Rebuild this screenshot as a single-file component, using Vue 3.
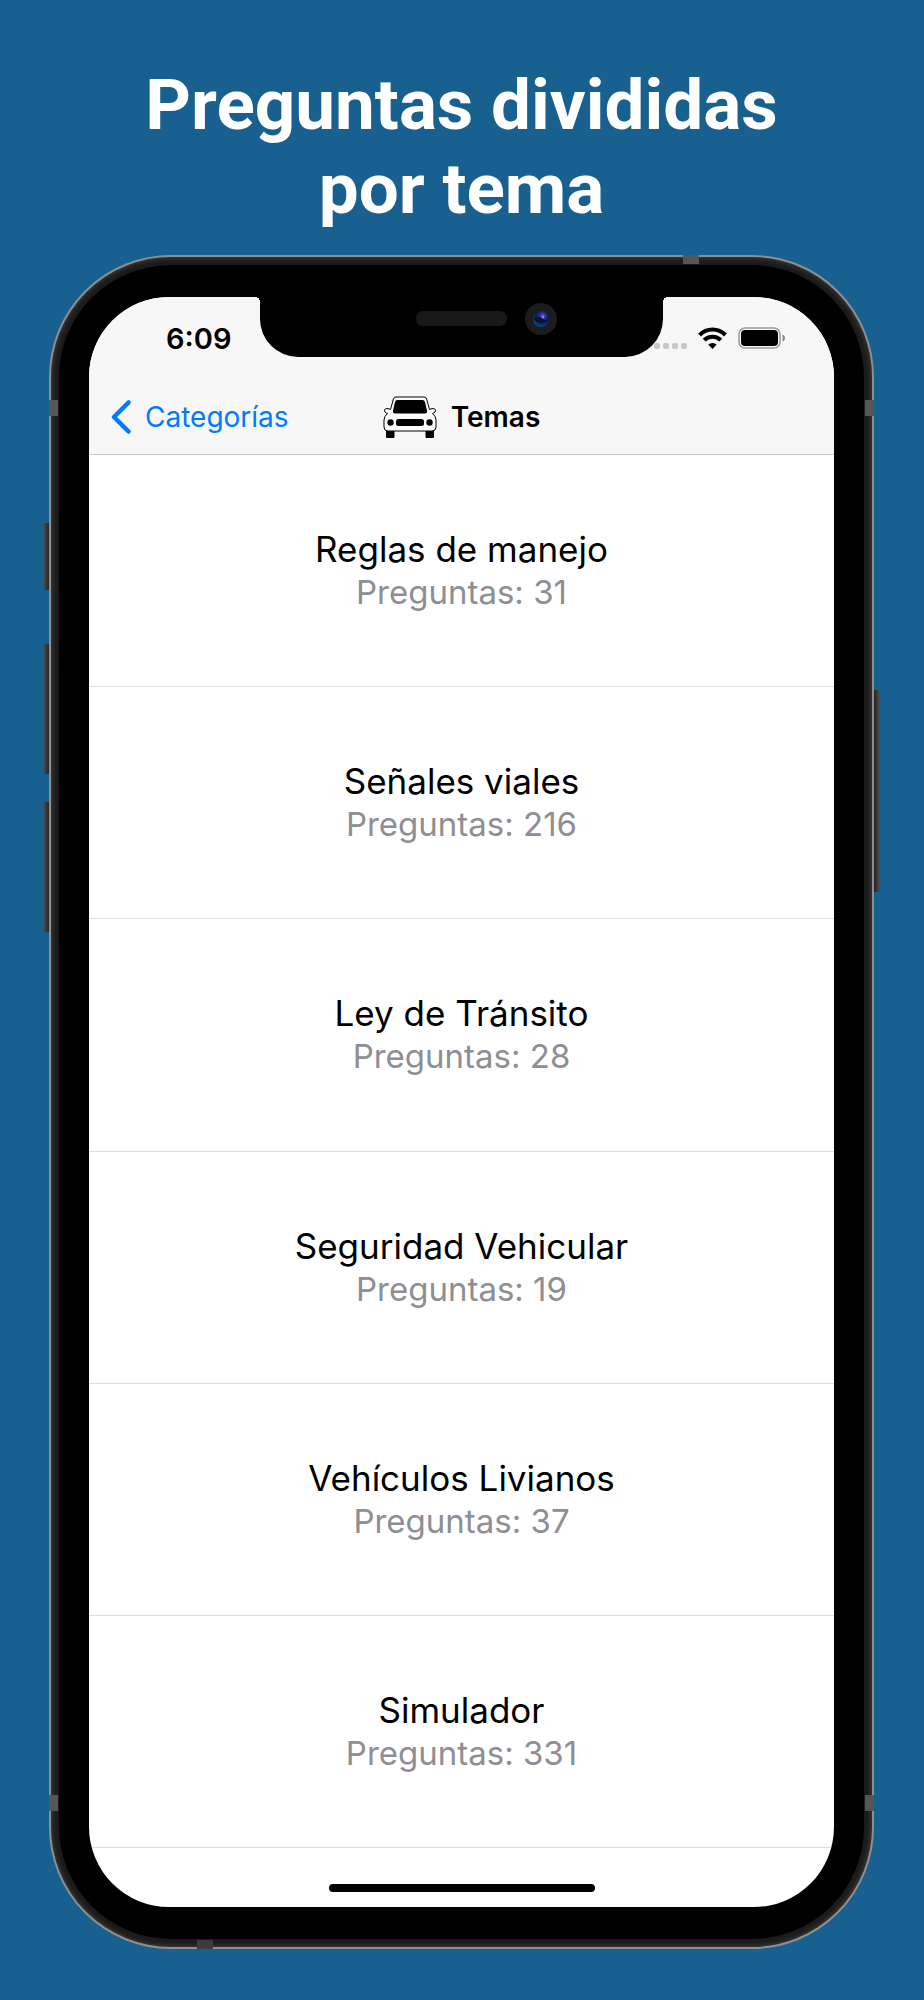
<script setup>
const topics = [
  { name: 'Reglas de manejo', count: 31 },
  { name: 'Señales viales', count: 216 },
  { name: 'Ley de Tránsito', count: 28 },
  { name: 'Seguridad Vehicular', count: 19 },
  { name: 'Vehículos Livianos', count: 37 },
  { name: 'Simulador', count: 331 }
]
</script>

<template>
  <main class="page">
    <h1 class="headline">Preguntas divididas<br />por tema</h1>

    <div class="phone">
      <span class="key mute"></span>
      <span class="key volume-up"></span>
      <span class="key volume-down"></span>
      <span class="key power"></span>

      <div class="rim">
        <span class="antenna top"></span>
        <span class="antenna left-upper"></span>
        <span class="antenna right-upper"></span>
        <span class="antenna left-lower"></span>
        <span class="antenna right-lower"></span>
        <span class="antenna bottom"></span>
        <div class="bezel">
          <section class="screen">
            <header class="top-bar">
              <div class="status">
                <time class="clock">6:09</time>
                <div class="indicators">
                  <svg class="signal" viewBox="0 0 33 6" aria-hidden="true">
                    <rect x="0" width="6" height="6" rx="2" />
                    <rect x="9" width="6" height="6" rx="2" />
                    <rect x="18" width="6" height="6" rx="2" />
                    <rect x="27" width="6" height="6" rx="2" />
                  </svg>
                  <svg class="wifi" viewBox="0 0 29 22" aria-hidden="true">
                    <path d="M1.600 8A18 18 0 0 1 27.400 8" />
                    <path d="M6.200 13.200A11.500 11.500 0 0 1 22.800 13.200" />
                    <path class="wifi-dot" d="M14.500 22L10.300 17.600A6 6 0 0 1 18.700 17.600Z" />
                  </svg>
                  <svg class="battery" viewBox="0 0 48 22" aria-hidden="true">
                    <rect class="shell" x="1" y="1" width="41" height="20" rx="6" />
                    <rect x="3" y="3" width="37" height="16" rx="4" />
                    <path class="nub" d="M44.500 7.500C46.200 8 47 9.500 47 11S46.200 14 44.500 14.500Z" />
                  </svg>
                </div>
              </div>
              <nav class="nav">
                <button class="back" type="button">
                  <svg viewBox="0 0 20 34" aria-hidden="true"><path d="M17.500 2.500L3 17L17.500 31.500" /></svg>
                  <span>Categorías</span>
                </button>
                <div class="title">
                  <svg class="car" viewBox="0 0 54 42" aria-hidden="true">
                    <path class="body" d="M13 1H41Q43 1 43.600 3L46.500 13.500Q49 12 51.500 12.800Q53.500 13.800 52 16Q51 17.200 49.500 17.500Q52.800 20 53 24V31Q53 35 49 35H5Q1 35 1 31V24Q1.200 20 4.500 17.500Q3 17.200 2 16Q.5 13.800 2.500 12.800Q5 12 7.500 13.500L10.400 3Q11 1 13 1Z" />
                    <path d="M14.500 4H39.500Q41.500 4 42 6L44 14.500Q44.500 17.500 42 17.500H12Q9.500 17.500 10 14.500L12 6Q12.500 4 14.500 4Z" />
                    <rect x="13" y="23" width="28" height="7" rx="2.500" />
                    <circle cx="7.500" cy="26.500" r="3.200" />
                    <circle cx="46.500" cy="26.500" r="3.200" />
                    <path d="M3 35H11.500V41Q11.500 42 10.500 42H4Q3 42 3 41ZM42.500 35H51V41Q51 42 50 42H43.500Q42.500 42 42.500 41Z" />
                  </svg>
                  <h2>Temas</h2>
                </div>
              </nav>
            </header>

            <ul class="topics">
              <li v-for="topic in topics" :key="topic.name" class="topic">
                <h3>{{ topic.name }}</h3>
                <p>Preguntas: {{ topic.count }}</p>
              </li>
            </ul>
            <div class="home"><span></span></div>
          </section>

          <div class="notch">
            <span class="speaker"></span>
            <svg class="camera" viewBox="0 0 32 32" aria-hidden="true">
              <defs>
                <radialGradient id="lens" cx="0.600" cy="0.300" r="0.700">
                  <stop offset="0" stop-color="#6a5fd0" />
                  <stop offset="0.250" stop-color="#2b2a9c" />
                  <stop offset="0.600" stop-color="#0b1a52" />
                  <stop offset="1" stop-color="#0b4a80" />
                </radialGradient>
              </defs>
              <circle cx="16" cy="16" r="16" fill="#1c1c1d" />
              <circle cx="16" cy="16" r="8" fill="url(#lens)" />
              <path d="M8.500 16Q14 12 18 16Q21 18 23 17Q20 20 16 20T8.500 16Z" fill="#081538" />
              <circle cx="18" cy="14" r="1.500" fill="#8a7be0" />
            </svg>
          </div>
        </div>
      </div>
    </div>
  </main>
</template>

<style>
body {
  background: #186090;
}
</style>

<style scoped>
.page {
  min-height: 100vh;
  padding: 63px 50px 51px 49px;
  box-sizing: border-box;
  background: #186090;
  font-family: Inter, "Liberation Sans", sans-serif;
}
h1, h2, h3, p, ul {
  margin: 0;
  padding: 0;
}
.headline {
  color: #fff;
  font: 700 71px/84px Roboto, sans-serif;
  text-align: center;
  margin-bottom: 24px;
}
.phone {
  position: relative;
}
.rim {
  position: relative;
  padding: 8px;
  border: 2px solid #8f8f8f;
  border-radius: 122px;
  background: #1b1b1b;
  box-shadow: inset 0 0 5px 1px #414141;
}
.bezel {
  position: relative;
  padding: 32px 30px;
  border-radius: 112px;
  background: #000;
}
.screen {
  overflow: hidden;
  border-radius: 80px;
  background: #fff;
}
.key {
  position: absolute;
  left: -6px;
  width: 6px;
  border-radius: 3px 0 0 3px;
  background: linear-gradient(90deg, #55524f, #403e3c 40%, #252525);
}
.mute { top: 268px; height: 67px; }
.volume-up { top: 389px; height: 130px; }
.volume-down { top: 547px; height: 130px; }
.power {
  top: 435px;
  right: -6px;
  left: auto;
  height: 202px;
  border-radius: 0 3px 3px 0;
  background: linear-gradient(270deg, #55524f, #403e3c 40%, #252525);
}
.antenna {
  position: absolute;
  width: 9px;
  height: 16px;
  background: #565656;
}
.top { top: -2px; right: 173px; width: 16px; height: 9px; }
.left-upper { top: 143px; left: -2px; }
.right-upper { top: 143px; right: -2px; }
.left-lower { bottom: 136px; left: -2px; }
.right-lower { bottom: 136px; right: -2px; }
.bottom { bottom: -2px; left: 146px; width: 16px; height: 9px; background: #3c3c3c; }
.top-bar {
  border-bottom: 1px solid #c9c9c9;
  background: #f7f7f7;
}
.status {
  display: flex;
  align-items: center;
  justify-content: space-between;
  height: 82px;
  padding: 0 48px 0 77px;
}
.clock {
  font-size: 29px;
  font-weight: 600;
}
.indicators {
  display: flex;
  align-items: center;
  gap: 11px;
}
.signal {
  width: 33px;
  height: 6px;
  margin-top: 15px;
  fill: #c7c7c7;
}
.wifi {
  width: 29px;
  height: 22px;
  fill: none;
  stroke: #000;
  stroke-width: 4;
}
.wifi-dot {
  fill: #000;
  stroke: none;
}
.battery {
  width: 48px;
  height: 22px;
}
.shell {
  fill: none;
  stroke: #9a9a9a;
  stroke-width: 1.5;
}
.nub { fill: #8a8a8a; }
.nav {
  display: grid;
  grid-template-columns: 1fr auto 1fr;
  align-items: center;
  height: 75px;
  padding: 0 22px;
}
.back {
  display: flex;
  align-items: center;
  justify-self: start;
  gap: 14px;
  padding: 0;
  border: 0;
  background: none;
  color: #007aff;
  font: 400 28px/36px Inter, "Liberation Sans", sans-serif;
}
.back svg {
  width: 20px;
  height: 34px;
  fill: none;
  stroke: currentColor;
  stroke-width: 4.5;
  stroke-linecap: round;
  stroke-linejoin: round;
}
.title {
  display: flex;
  align-items: center;
  gap: 14px;
}
.car {
  width: 54px;
  height: 42px;
}
.body {
  fill: #fcfcfc;
  stroke: #000;
}
h2 {
  font-size: 28px;
  line-height: 36px;
  font-weight: 600;
}
.topics {
  display: grid;
  grid-auto-rows: 1fr;
  min-height: 1393px;
  list-style: none;
}
.topic {
  padding-top: 72px;
  border-bottom: 1px solid #dedede;
  text-align: center;
}
h3 {
  color: #000;
  font-size: 35px;
  line-height: 44px;
  font-weight: 400;
}
p {
  color: #8e8e93;
  font-size: 33px;
  line-height: 43px;
}
.home {
  display: flex;
  justify-content: center;
  padding: 36px 0 15px;
}
.home span {
  width: 266px;
  height: 8px;
  border-radius: 4px;
  background: #000;
}
.notch {
  position: absolute;
  top: 32px;
  left: 50%;
  width: 403px;
  height: 60px;
  margin-left: -202px;
  border-radius: 0 0 38px 38px;
  background: #000;
}
.notch::before,
.notch::after {
  content: "";
  position: absolute;
  top: 0;
  width: 5px;
  height: 5px;
}
.notch::before {
  left: -5px;
  background: radial-gradient(circle at 0 100%, transparent 5px, #000 5px);
}
.notch::after {
  right: -5px;
  background: radial-gradient(circle at 100% 100%, transparent 5px, #000 5px);
}
.speaker {
  position: absolute;
  top: 14px;
  left: 156px;
  width: 91px;
  height: 15px;
  border-radius: 7px;
  background: #181818;
}
.camera {
  position: absolute;
  top: 6px;
  left: 265px;
  width: 32px;
  height: 32px;
}
</style>
